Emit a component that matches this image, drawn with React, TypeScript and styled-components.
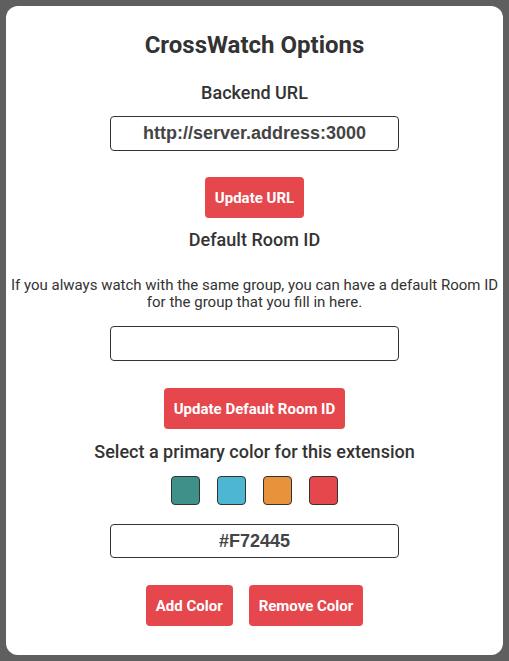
import React, { useState } from "react";
import styled, { createGlobalStyle } from "styled-components";

const GlobalStyle = createGlobalStyle`
  html, body {
    margin: 0;
    padding: 0;
    background: #5f5f5f;
  }
  body {
    padding: 6px 6px 6px 6px;
    font-family: Roboto, "Liberation Sans", sans-serif;
    color: #333;
  }
`;

const COLORS = ["#3e9189", "#4db7d3", "#e8923b", "#e5474d"];

const App: React.FC = () => {
  const [url, setUrl] = useState("http://server.address:3000");
  const [room, setRoom] = useState("");
  const [hex, setHex] = useState("#F72445");

  return (
    <>
      <GlobalStyle />
      <Card>
        <Title>CrossWatch Options</Title>

        <Heading $top={23}>Backend URL</Heading>
        <Field $top={12} value={url} onChange={(e) => setUrl(e.target.value)} />
        <Button $top={26}>Update URL</Button>

        <Heading $top={11}>Default Room ID</Heading>
        <Note>
          If you always watch with the same group, you can have a default Room ID
          <br />
          for the group that you fill in here.
        </Note>
        <Field $top={15} value={room} onChange={(e) => setRoom(e.target.value)} />
        <Button $top={27}>Update Default Room ID</Button>

        <Heading $top={12}>Select a primary color for this extension</Heading>
        <Swatches>
          {COLORS.map((c) => (
            <Swatch key={c} $color={c} onClick={() => setHex(c.toUpperCase())} />
          ))}
        </Swatches>
        <Field $top={19} $height={34} value={hex} onChange={(e) => setHex(e.target.value)} />
        <ButtonRow>
          <Button $top={0}>Add Color</Button>
          <Button $top={0}>Remove Color</Button>
        </ButtonRow>
      </Card>
    </>
  );
};

const Card = styled.div`
  background: #fff;
  border-radius: 12px;
  height: 649px;
  box-sizing: border-box;
  padding-top: 25px;
  display: flex;
  flex-direction: column;
  align-items: center;
  text-align: center;
`;

const Title = styled.h1`
  margin: 0;
  font-size: 24px;
  line-height: 28px;
  font-weight: 700;
  color: #333;
`;

const Heading = styled.h2<{ $top: number }>`
  margin: ${(p) => p.$top}px 0 0;
  font-size: 18px;
  line-height: 22px;
  font-weight: 500;
  color: #333;
`;

const Note = styled.p`
  margin: 26px 0 0;
  font-size: 15px;
  line-height: 17px;
  color: #333;
`;

const Field = styled.input<{ $top: number; $height?: number }>`
  margin-top: ${(p) => p.$top}px;
  width: 289px;
  height: ${(p) => p.$height ?? 35}px;
  box-sizing: border-box;
  border: 1px solid #333;
  border-radius: 4px;
  background: #fff;
  padding: 0 8px;
  text-align: center;
  font-family: "Liberation Sans", Arial, sans-serif;
  font-size: 18px;
  font-weight: 700;
  color: #444;
  outline: none;
`;

const Button = styled.button<{ $top: number }>`
  margin-top: ${(p) => p.$top}px;
  height: 41px;
  padding: 0 10px;
  border: none;
  border-radius: 4px;
  background: #e5474d;
  color: #fff;
  font-family: Roboto, "Liberation Sans", sans-serif;
  font-size: 15px;
  font-weight: 700;
  cursor: pointer;
`;

const Swatches = styled.div`
  margin-top: 13px;
  display: flex;
  gap: 17px;
`;

const Swatch = styled.div<{ $color: string }>`
  width: 29px;
  height: 29px;
  box-sizing: border-box;
  border: 1px solid #333;
  border-radius: 4px;
  background: ${(p) => p.$color};
  cursor: pointer;
`;

const ButtonRow = styled.div`
  margin-top: 27px;
  display: flex;
  gap: 16px;
`;

export default App;
